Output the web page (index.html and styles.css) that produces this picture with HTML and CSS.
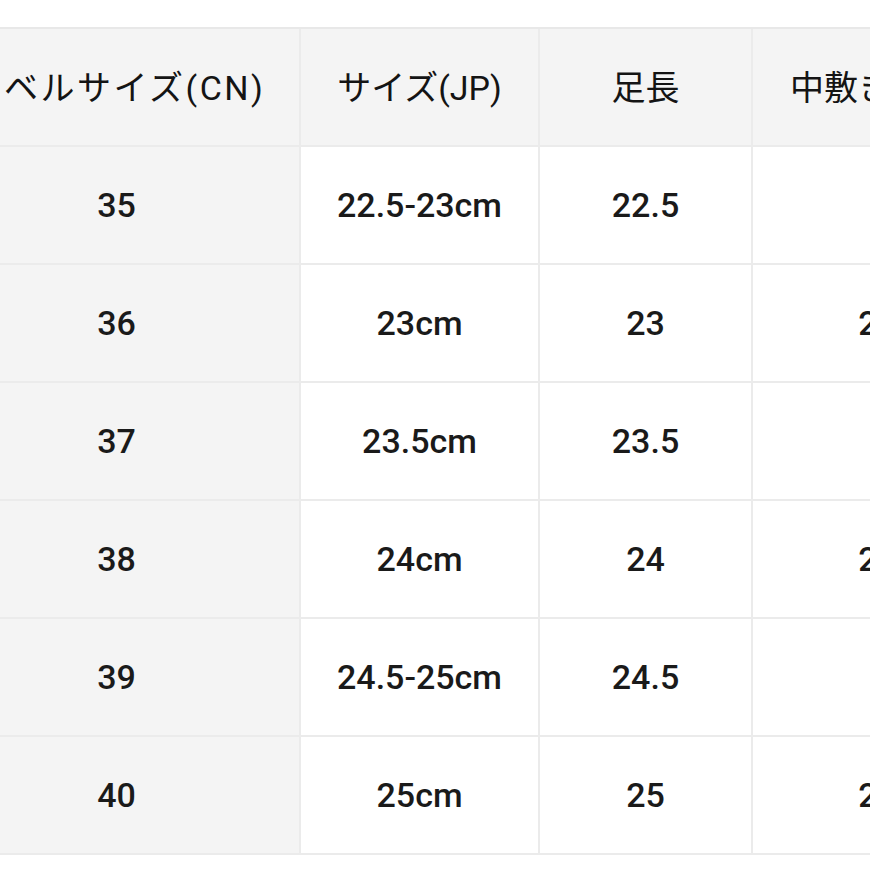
FILE: index.html
```html
<!DOCTYPE html>
<html lang="ja">
<head>
<meta charset="utf-8">
<title>サイズ表</title>
<link rel="stylesheet" href="styles.css">
</head>
<body>
<div class="viewport">
  <div class="size-table">
    <div class="cell head first label">ラベルサイズ(CN)</div>
    <div class="cell head">サイズ(JP)</div>
    <div class="cell head">足長</div>
    <div class="cell head">中敷きの長さ</div>

    <div class="cell first num">35</div>
    <div class="cell num">22.5-23cm</div>
    <div class="cell num">22.5</div>
    <div class="cell num">23</div>

    <div class="cell first num">36</div>
    <div class="cell num">23cm</div>
    <div class="cell num">23</div>
    <div class="cell num">23.5</div>

    <div class="cell first num">37</div>
    <div class="cell num">23.5cm</div>
    <div class="cell num">23.5</div>
    <div class="cell num">24</div>

    <div class="cell first num">38</div>
    <div class="cell num">24cm</div>
    <div class="cell num">24</div>
    <div class="cell num">24.5</div>

    <div class="cell first num">39</div>
    <div class="cell num">24.5-25cm</div>
    <div class="cell num">24.5</div>
    <div class="cell num">25</div>

    <div class="cell first num">40</div>
    <div class="cell num">25cm</div>
    <div class="cell num">25</div>
    <div class="cell num">25.5</div>
  </div>
</div>
</body>
</html>
```
FILE: styles.css
```css
html, body {
  margin: 0;
  padding: 0;
  background: #ffffff;
}

.viewport {
  width: 870px;
  height: 870px;
  overflow: hidden;
  padding-top: 27px;
  box-sizing: border-box;
}

.size-table {
  display: grid;
  grid-template-columns: 367px 239px 213px 280px;
  grid-auto-rows: 118px;
  margin-left: -66px;
  width: max-content;
  border-top: 2px solid #e8e8e8;
  font-family: "Roboto", "Noto Sans CJK JP", sans-serif;
  color: #141414;
}

.cell {
  display: flex;
  align-items: center;
  justify-content: center;
  border-right: 2px solid #ebebeb;
  border-bottom: 2px solid #ebebeb;
  background: #ffffff;
  white-space: nowrap;
  box-sizing: border-box;
}

.head {
  background: #f4f4f4;
  font-size: 34px;
  font-weight: 400;
  padding-bottom: 4px;
}

.head.label {
  letter-spacing: 2.5px;
}

.first {
  background: #f4f4f4;
}

.num {
  font-size: 34px;
  font-weight: 500;
  color: #1a1a1a;
}
```
